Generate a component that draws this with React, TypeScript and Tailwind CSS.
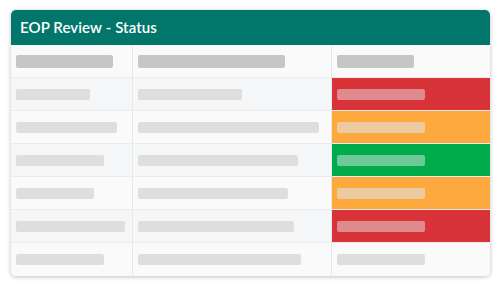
type Status = 'red' | 'orange' | 'green' | 'none';

interface Row {
  a: number;
  b: number;
  status: Status;
}

const rows: Row[] = [
  { a: 74, b: 104, status: 'red' },
  { a: 101, b: 181, status: 'orange' },
  { a: 88, b: 160, status: 'green' },
  { a: 78, b: 150, status: 'orange' },
  { a: 109, b: 156, status: 'red' },
  { a: 88, b: 163, status: 'none' },
];

const statusBg: Record<Status, string> = {
  red: 'bg-[#d73338]',
  orange: 'bg-[#fea93d]',
  green: 'bg-[#00ab4b]',
  none: '',
};

const statusBar: Record<Status, string> = {
  red: 'bg-[#df8a8d]',
  orange: 'bg-[#eccba0]',
  green: 'bg-[#6ec999]',
  none: 'bg-[#dedede]',
};

export default function App() {
  return (
    <div className="w-[500px] h-[289px] bg-white pt-[10px] pl-[11px]" style={{ fontFamily: 'Lato, "Open Sans", sans-serif' }}>
      <div className="w-[479px] rounded-[5px] overflow-hidden bg-[#fafafa] shadow-[0_1px_4px_rgba(0,0,0,0.25)]">
        {/* Title bar */}
        <div className="h-[35px] bg-[#02766a] flex items-center pl-[9px]">
          <span className="text-white text-[15px] font-semibold tracking-[0.1px]">EOP Review - Status</span>
        </div>

        {/* Column header */}
        <div className="grid grid-cols-[122px_199px_158px] h-[33px] border-b border-[#ececec]">
          <div className="flex items-center pl-[5px] border-r border-[#e6e6e6]">
            <div className="w-[97px] h-[13px] rounded-[2px] bg-[#c6c6c6]" />
          </div>
          <div className="flex items-center pl-[5px] border-r border-[#e6e6e6]">
            <div className="w-[147px] h-[13px] rounded-[2px] bg-[#c6c6c6]" />
          </div>
          <div className="flex items-center pl-[5px]">
            <div className="w-[77px] h-[13px] rounded-[2px] bg-[#c6c6c6]" />
          </div>
        </div>

        {rows.map((row, i) => (
          <div
            key={i}
            className={`grid grid-cols-[122px_199px_158px] h-[33px] ${i < rows.length - 1 ? 'border-b border-[#ececec]' : ''} ${i % 2 === 0 ? 'bg-[#f5f6f8]' : 'bg-[#fafafa]'}`}
          >
            <div className="flex items-center pl-[5px] border-r border-[#e8e8e8]">
              <div className="h-[11px] rounded-[2px] bg-[#dedede]" style={{ width: row.a }} />
            </div>
            <div className="flex items-center pl-[5px] border-r border-[#e8e8e8]">
              <div className="h-[11px] rounded-[2px] bg-[#dedede]" style={{ width: row.b }} />
            </div>
            <div className={`flex items-center pl-[5px] ${statusBg[row.status]} ${row.status === 'none' ? 'bg-[#fafafa]' : ''}`}>
              <div className={`w-[88px] h-[11px] rounded-[2px] ${statusBar[row.status]}`} />
            </div>
          </div>
        ))}
      </div>
    </div>
  );
}
